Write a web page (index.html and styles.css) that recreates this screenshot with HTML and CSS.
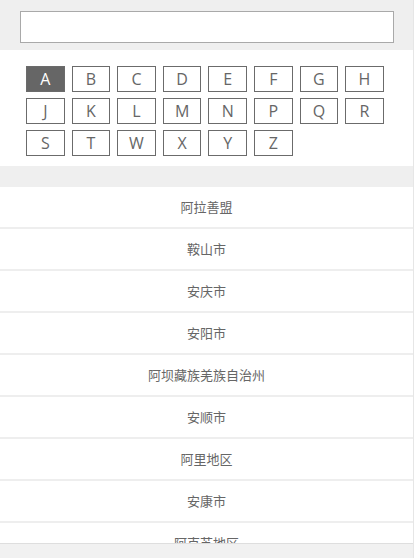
FILE: index.html
```html
<!DOCTYPE html>
<html lang="zh">
<head>
<meta charset="utf-8">
<link rel="stylesheet" href="styles.css">
</head>
<body>
<div class="page">
  <div class="search"><input class="search-input" type="text"></div>
  <div class="letters">
    <span class="letter active">A</span>
    <span class="letter">B</span>
    <span class="letter">C</span>
    <span class="letter">D</span>
    <span class="letter">E</span>
    <span class="letter">F</span>
    <span class="letter">G</span>
    <span class="letter">H</span>
    <span class="letter">J</span>
    <span class="letter">K</span>
    <span class="letter">L</span>
    <span class="letter">M</span>
    <span class="letter">N</span>
    <span class="letter">P</span>
    <span class="letter">Q</span>
    <span class="letter">R</span>
    <span class="letter">S</span>
    <span class="letter">T</span>
    <span class="letter">W</span>
    <span class="letter">X</span>
    <span class="letter">Y</span>
    <span class="letter">Z</span>
  </div>
  <div class="band"></div>
  <ul class="list">
    <li class="item">阿拉善盟</li>
    <li class="item">鞍山市</li>
    <li class="item">安庆市</li>
    <li class="item">安阳市</li>
    <li class="item">阿坝藏族羌族自治州</li>
    <li class="item">安顺市</li>
    <li class="item">阿里地区</li>
    <li class="item">安康市</li>
    <li class="item">阿克苏地区</li>
  </ul>
  <div class="footer"></div>
</div>
</body>
</html>
```
FILE: styles.css
```css
html, body {
  margin: 0;
  padding: 0;
  background: #ffffff;
  height: 558px;
  overflow: hidden;
}
.page {
  width: 413px;
  border-right: 1px solid #e6e6e6;
  font-family: "Noto Sans CJK SC", "Noto Sans", sans-serif;
}
.search {
  background: #efefef;
  padding: 11px 19px 7px 20px;
}
.search-input {
  display: block;
  box-sizing: border-box;
  width: 100%;
  height: 32px;
  margin: 0;
  border: 1px solid #a9a9a9;
  background: #fff;
  outline: none;
}
.letters {
  display: grid;
  grid-template-columns: repeat(8, 38.6px);
  column-gap: 7px;
  row-gap: 6px;
  padding: 16px 0 10px 26px;
  background: #fff;
}
.letter {
  box-sizing: border-box;
  height: 26px;
  border: 1px solid #6b6b6b;
  color: #666;
  font-family: "Open Sans", sans-serif;
  font-size: 16px;
  font-weight: 400;
  line-height: 24px;
  text-align: center;
}
.letter.active {
  background: #666;
  color: #fff;
}
.band {
  height: 21px;
  background: #efefef;
}
.list {
  list-style: none;
  margin: 0;
  padding: 0;
  height: 356px;
  overflow: hidden;
  background: #fff;
}
.item {
  height: 40px;
  line-height: 40px;
  border-bottom: 2px solid #eeeeee;
  text-align: center;
  font-size: 13px;
  color: #666;
}
.footer {
  height: 15px;
  background: #f1f1f1;
  border-top: 1px solid #dedede;
}
```
